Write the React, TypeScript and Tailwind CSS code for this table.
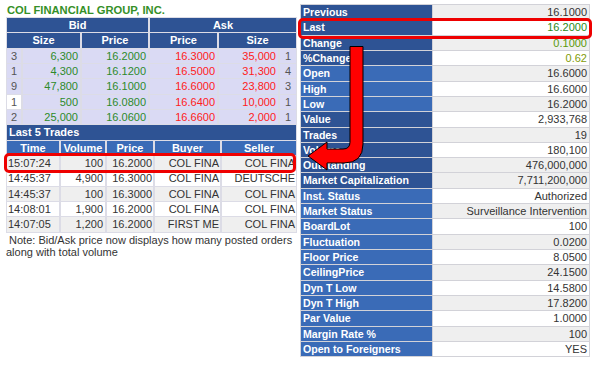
import React from "react";

const DARK = "bg-[#2e5394]";
const LIGHT = "bg-[#3a6bb7]";

const bidRows = [
  ["3", "6,300", "16.2000", "16.3000", "35,000", "1"],
  ["1", "4,300", "16.1200", "16.5000", "31,300", "4"],
  ["9", "47,800", "16.1000", "16.6000", "23,800", "3"],
  ["1", "500", "16.0800", "16.6400", "10,000", "1"],
  ["2", "25,000", "16.0600", "16.6600", "2,000", "1"],
];

const trades = [
  ["15:07:24", "100", "16.2000", "COL FINA", "COL FINA"],
  ["14:45:37", "4,900", "16.3000", "COL FINA", "DEUTSCHE"],
  ["14:45:37", "100", "16.3000", "COL FINA", "COL FINA"],
  ["14:08:01", "1,900", "16.2000", "COL FINA", "COL FINA"],
  ["14:07:05", "1,200", "16.2000", "FIRST ME", "COL FINA"],
];

type Info = { label: string; value: string; dark: boolean; gray: boolean; color?: string };

const info: Info[] = [
  { label: "Previous", value: "16.1000", dark: true, gray: true },
  { label: "Last", value: "16.2000", dark: true, gray: false, color: "text-[#2a8a1a]" },
  { label: "Change", value: "0.1000", dark: true, gray: true, color: "text-[#5c9a0c]" },
  { label: "%Change", value: "0.62", dark: true, gray: false, color: "text-[#7f9c08]" },
  { label: "Open", value: "16.6000", dark: false, gray: true },
  { label: "High", value: "16.6000", dark: false, gray: false },
  { label: "Low", value: "16.2000", dark: false, gray: true },
  { label: "Value", value: "2,933,768", dark: true, gray: false },
  { label: "Trades", value: "19", dark: true, gray: true },
  { label: "Volume", value: "180,100", dark: true, gray: false },
  { label: "Outstanding", value: "476,000,000", dark: true, gray: true },
  { label: "Market Capitalization", value: "7,711,200,000", dark: true, gray: true },
  { label: "Inst. Status", value: "Authorized", dark: false, gray: false },
  { label: "Market Status", value: "Surveillance Intervention", dark: false, gray: true },
  { label: "BoardLot", value: "100", dark: false, gray: false },
  { label: "Fluctuation", value: "0.0200", dark: false, gray: true },
  { label: "Floor Price", value: "8.0500", dark: false, gray: false },
  { label: "CeilingPrice", value: "24.1500", dark: false, gray: true },
  { label: "Dyn T Low", value: "14.5800", dark: false, gray: false },
  { label: "Dyn T High", value: "17.8200", dark: false, gray: true },
  { label: "Par Value", value: "1.0000", dark: false, gray: false },
  { label: "Margin Rate %", value: "100", dark: false, gray: true },
  { label: "Open to Foreigners", value: "YES", dark: false, gray: false },
];

export default function App() {
  return (
    <div
      className="relative w-[594px] h-[366px] bg-white overflow-hidden text-[11px] text-[#333]"
      style={{ fontFamily: '"Liberation Sans", Arial, sans-serif' }}
    >
      <div className="flex">
        {/* Left panel */}
        <div className="w-[300px] pl-[6px] pt-[3px]">
          <div className="h-[14px] leading-[14px] pl-[1px] font-bold text-[11.2px] text-[#359028]">
            COL FINANCIAL GROUP, INC.
          </div>
          <div className="w-[291px] bg-[#dcdce6] p-px flex flex-col gap-px">
            <div className="flex gap-[2px] h-[14.33px] text-white font-bold">
              <div className={`w-[141px] ${DARK} flex items-center justify-center`}>Bid</div>
              <div className={`w-[146px] ${DARK} flex items-center justify-center`}>Ask</div>
            </div>
            <div className="flex gap-[2px] h-[14.33px] text-white font-bold">
              <div className={`w-[73px] ${DARK} flex items-center justify-center`}>Size</div>
              <div className={`w-[66px] ${DARK} flex items-center justify-center`}>Price</div>
              <div className={`w-[67px] ${DARK} flex items-center justify-center`}>Price</div>
              <div className={`w-[77px] ${DARK} flex items-center justify-center`}>Size</div>
            </div>
            {bidRows.map((r, i) => (
              <div key={i} className="flex gap-[2px] h-[14.33px] leading-[14px]">
                <div className={`w-[14px] ${i === 3 ? "bg-white" : "bg-[#dadaf4]"} text-center text-[#555]`}>{r[0]}</div>
                <div className="w-[57px] bg-[#dadaf4] text-right pr-[2px] text-[#2d8a2a]">{r[1]}</div>
                <div className="w-[66px] bg-[#dadaf4] text-right pr-[2px] text-[#2d8a2a]">{r[2]}</div>
                <div className="w-[67px] bg-[#dadaf4] text-right pr-[2px] text-[#ff2020]">{r[3]}</div>
                <div className="w-[59px] bg-[#dadaf4] text-right pr-[2px] text-[#ff2020]">{r[4]}</div>
                <div className="w-[16px] bg-[#dadaf4] text-center text-[#555]">{r[5]}</div>
              </div>
            ))}
            <div className={`h-[14.33px] ${DARK} text-white font-bold pl-[2px] leading-[14px]`}>Last 5 Trades</div>
            <div className="flex gap-[2px] h-[14.33px] text-white font-bold leading-[14px]">
              <div className={`w-[52px] ${LIGHT} text-center`}>Time</div>
              <div className={`w-[44px] ${LIGHT} text-center`}>Volume</div>
              <div className={`w-[46px] ${LIGHT} text-center`}>Price</div>
              <div className={`w-[65px] ${LIGHT} text-center`}>Buyer</div>
              <div className={`w-[74px] ${LIGHT} text-center`}>Seller</div>
            </div>
            {trades.map((r, i) => {
              const bg = i % 2 === 0 ? "bg-[#efefef]" : "bg-white";
              return (
                <div key={i} className="flex gap-[2px] h-[14.33px] leading-[14px]">
                  <div className={`w-[52px] ${bg} pl-[1px] overflow-hidden whitespace-nowrap`}>{r[0]}</div>
                  <div className={`w-[44px] ${bg} text-right pr-[2px]`}>{r[1]}</div>
                  <div className={`w-[46px] ${bg} text-right pr-[1px]`}>{r[2]}</div>
                  <div className={`w-[65px] ${bg} text-right pr-[1px] overflow-hidden whitespace-nowrap`}>{r[3]}</div>
                  <div className={`w-[74px] ${bg} text-right pr-[1px] overflow-hidden whitespace-nowrap`}>{r[4]}</div>
                </div>
              );
            })}
          </div>
          <div className="pt-[1px] leading-[12px] text-[11px] text-[#333] w-[294px]">
            &nbsp;Note: Bid/Ask price now displays how many posted orders along with total volume
          </div>
        </div>

        {/* Right panel */}
        <div className="pt-[4px]">
          <div className="w-[290px] bg-[#d2d2d8] p-px flex flex-col gap-px">
            {info.map((r, i) => (
              <div key={i} className="flex gap-px h-[14.32px] leading-[14px]">
                <div className={`w-[131px] ${r.dark ? DARK : LIGHT} text-white font-bold text-[10.6px] pl-[2px] whitespace-nowrap`}>
                  {r.label}
                </div>
                <div className={`w-[156px] ${r.gray ? "bg-[#efefef]" : "bg-white"} text-right pr-[2px] ${r.color ?? "text-[#333]"}`}>
                  {r.value}
                </div>
              </div>
            ))}
          </div>
        </div>
      </div>

      {/* Highlights */}
      <div className="absolute left-[298px] top-[18px] w-[294px] h-[21px] border-[3px] border-[#ee0000] rounded-[5px]" />
      <div className="absolute left-[4px] top-[153px] w-[292px] h-[20px] border-[3px] border-[#ee0000] rounded-[5px]" />

      {/* Arrow */}
      <svg className="absolute left-0 top-0 pointer-events-none" width="594" height="366" viewBox="0 0 594 366">
        <path
          d="M350,46.5 L363,46.5 L363,144 Q363,163 344,163 L327,163 L327,170 L308,156 L327,142 L327,149 L343,149 Q350,149 350,142 Z"
          fill="#ff0000"
          stroke="#000"
          strokeWidth="1"
        />
      </svg>
    </div>
  );
}
